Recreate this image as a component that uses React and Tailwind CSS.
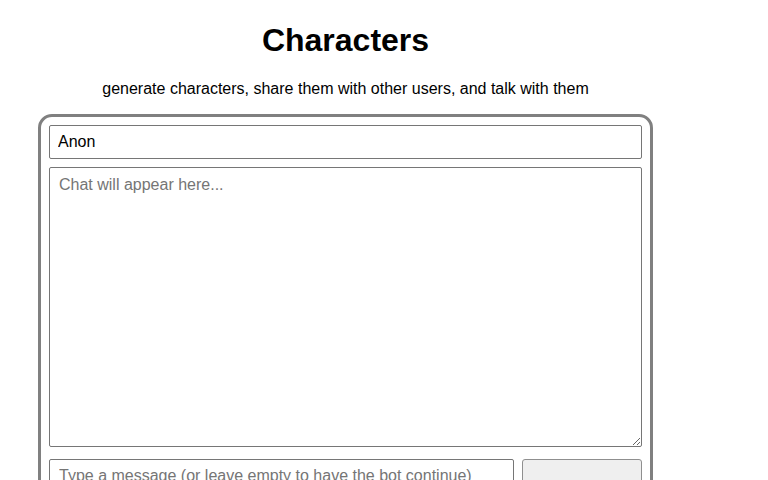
import React, { useState } from 'react';

const App = () => {
  const [name, setName] = useState('Anon');
  const [message, setMessage] = useState('');

  return (
    <div className="min-h-screen bg-white font-['Liberation_Sans',Arial,sans-serif] text-black">
      <div className="w-[691px] pt-px flex flex-col items-center">
        <h1 className="mt-[21px] mb-[21px] text-[32px] leading-[37px] font-bold">Characters</h1>
        <p className="text-base leading-[18px] mb-4">
          generate characters, share them with other users, and talk with them
        </p>

        <div className="w-[615px] border-[3px] border-[#808080] rounded-[14px] p-2 flex flex-col">
          <input
            value={name}
            onChange={(e) => setName(e.target.value)}
            className="h-[34px] w-full border border-[#767676] rounded-[2px] px-2 text-base outline-none"
          />
          <textarea
            readOnly
            placeholder="Chat will appear here..."
            className="mt-2 h-[280px] w-full border border-[#767676] rounded-[2px] px-[9px] py-[8px] text-base leading-[18px] placeholder:text-[#757575] resize-y outline-none"
          />
          <div className="mt-[12px] flex items-start gap-2">
            <input
              value={message}
              onChange={(e) => setMessage(e.target.value)}
              placeholder="Type a message (or leave empty to have the bot continue)"
              className="flex-1 h-[34px] border border-[#767676] rounded-[2px] px-[9px] text-base placeholder:text-[#757575] outline-none"
            />
            <button className="w-[120px] h-[64px] bg-[#efefef] border border-[#8f8f8f] rounded-[3px] text-base">
              Send
            </button>
          </div>
        </div>
      </div>
    </div>
  );
};

export default App;
